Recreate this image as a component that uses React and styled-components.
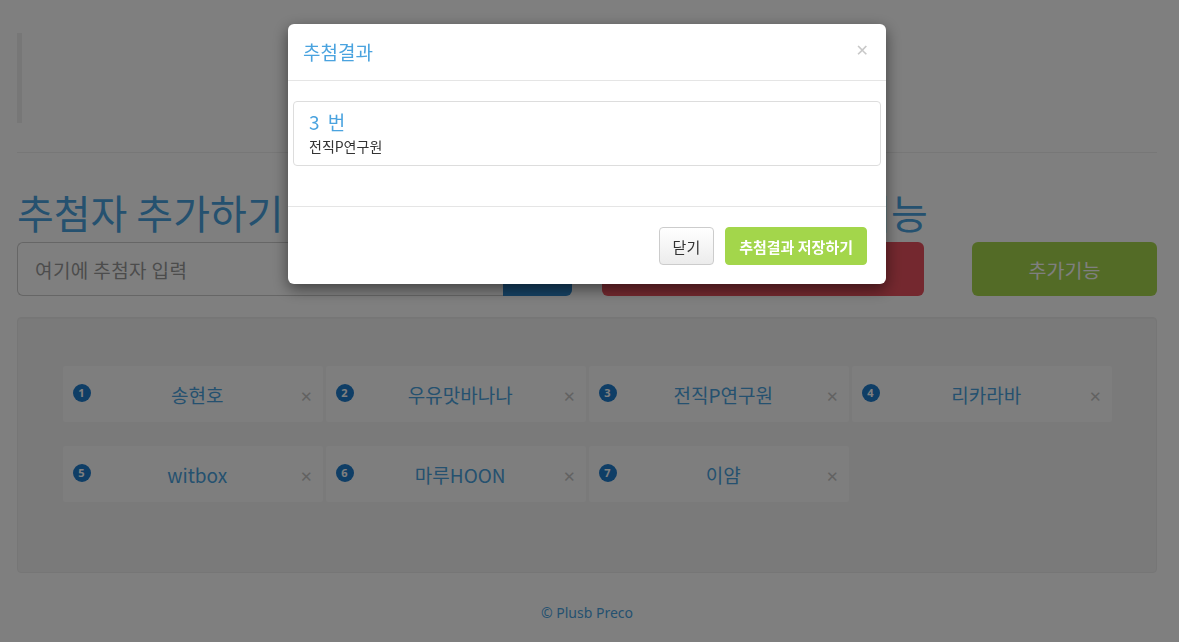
import styled, { createGlobalStyle } from 'styled-components'

const GlobalStyle = createGlobalStyle`
  html, body {
    margin: 0;
    padding: 0;
    background: #fff;
    font-family: "Noto Sans", "Noto Sans CJK KR", sans-serif;
    color: #333;
    font-size: 14px;
  }
  * { box-sizing: border-box; }
`

const Page = styled.div`
  padding: 33px 22px 0 17px;
  height: 642px;
  overflow: hidden;
`

const Quote = styled.blockquote`
  margin: 0;
  height: 90px;
  border-left: 5px solid #eee;
`

const Rule = styled.hr`
  margin: 29px 0 0;
  border: 0;
  border-top: 1px solid #eee;
`

const TopRow = styled.div`
  display: grid;
  grid-template-columns: 555px 555px;
  column-gap: 30px;
  margin-top: 39px;
`

const Heading = styled.h1`
  margin: 0 0 10px;
  font-family: "Noto Sans CJK KR", sans-serif;
  font-weight: 400;
  font-size: 40px;
  line-height: 40px;
  color: #4aa3df;
  white-space: nowrap;
`

const InputGroup = styled.div`
  display: flex;
  height: 54px;
`

const TextInput = styled.input`
  flex: 1;
  min-width: 0;
  border: 1px solid #ccc;
  border-right: 0;
  border-radius: 6px 0 0 6px;
  padding: 0 17px;
  font-family: "Noto Sans CJK KR", sans-serif;
  font-size: 19px;
  letter-spacing: 0.4px;
  color: #555;
  &::placeholder { color: #999; }
`

const AddButton = styled.button`
  width: 69px;
  border: 0;
  border-radius: 0 6px 6px 0;
  background: #2c84c8;
`

const ActionRow = styled.div`
  display: flex;
  justify-content: space-between;
  height: 54px;
`

const ActionButton = styled.button`
  width: ${p => p.$w}px;
  border: 0;
  border-radius: 6px;
  background: ${p => p.$bg};
  color: #fff;
  font-family: "Noto Sans CJK KR", sans-serif;
  font-size: 19.5px;
`

const Well = styled.div`
  margin-top: 21px;
  height: 256px;
  background: #f5f5f5;
  border: 1px solid #ececec;
  border-radius: 4px;
  box-shadow: inset 0 1px 1px rgba(0, 0, 0, 0.03);
  padding-top: 48px;
  display: grid;
  grid-template-columns: repeat(4, 260px);
  grid-auto-rows: 56px;
  column-gap: 3px;
  row-gap: 24px;
  justify-content: center;
  align-content: start;
`

const Card = styled.div`
  display: flex;
  align-items: center;
  padding: 0 10px;
  background: #fdfdfd;
  border-radius: 3px;
`

const Badge = styled.span`
  width: 18px;
  height: 18px;
  border-radius: 50%;
  background: #1f7ccc;
  color: #fff;
  font-family: "Noto Sans", sans-serif;
  font-weight: 700;
  font-size: 11px;
  line-height: 18px;
  text-align: center;
  margin-top: -2px;
`

const Name = styled.span`
  flex: 1;
  text-align: center;
  font-family: "Noto Sans CJK KR", sans-serif;
  font-size: 19px;
  color: #4aa3df;
  padding-left: 4px;
`

const Remove = styled.span`
  font-family: "DejaVu Sans", sans-serif;
  font-size: 15px;
  color: #c4c4c4;
  margin-top: 6px;
`

const Footer = styled.footer`
  text-align: center;
  margin-top: 30px;
  font-family: "Noto Sans", "Noto Sans CJK KR", sans-serif;
  font-size: 14px;
  color: #4aa3df;
`

const Backdrop = styled.div`
  position: fixed;
  inset: 0;
  background: rgba(0, 0, 0, 0.5);
`

const Dialog = styled.div`
  position: fixed;
  top: 24px;
  left: 288px;
  width: 598px;
  background: #fff;
  border-radius: 6px;
  box-shadow: 0 5px 15px rgba(0, 0, 0, 0.5);
  overflow: hidden;
`

const DialogHeader = styled.div`
  display: flex;
  align-items: center;
  justify-content: space-between;
  height: 57px;
  padding: 0 17px 2px 15px;
  border-bottom: 1px solid #e5e5e5;
`

const DialogTitle = styled.h4`
  margin: 0;
  font-family: "Noto Sans CJK KR", sans-serif;
  font-weight: 400;
  font-size: 19px;
  color: #4aa3df;
`

const Close = styled.span`
  font-family: "DejaVu Sans", sans-serif;
  font-size: 16px;
  color: #c8c8c8;
  margin-top: -2px;
`

const DialogBody = styled.div`
  padding: 20px 5px;
  height: 126px;
  border-bottom: 1px solid #e5e5e5;
`

const ResultBox = styled.div`
  height: 65px;
  border: 1px solid #ddd;
  border-radius: 4px;
  padding: 6px 15px 0;
`

const ResultNumber = styled.div`
  font-family: "Noto Sans CJK KR", sans-serif;
  font-size: 19px;
  line-height: 28px;
  word-spacing: 4px;
  color: #4aa3df;
`

const ResultName = styled.div`
  font-family: "Noto Sans CJK KR", sans-serif;
  font-size: 14px;
  line-height: 20px;
  color: #333;
`

const DialogFooter = styled.div`
  display: flex;
  justify-content: flex-end;
  gap: 11px;
  padding: 20px 19px 19px;
`

const FooterButton = styled.button`
  height: 38px;
  padding: 0 13px;
  border-radius: 4px;
  font-family: "Noto Sans CJK KR", sans-serif;
  font-size: 15px;
  font-weight: ${p => (p.$primary ? 700 : 400)};
  color: ${p => (p.$primary ? '#fff' : '#333')};
  border: 1px solid ${p => (p.$primary ? '#a3d64b' : '#ccc')};
  background: ${p => (p.$primary ? '#a3d64b' : 'linear-gradient(#fff, #ececec)')};
`

const entries = ['송현호', '우유맛바나나', '전직P연구원', '리카라바', 'witbox', '마루HOON', '이얌']

export default function App() {
  return (
    <>
      <GlobalStyle />
      <Page>
        <Quote />
        <Rule />
        <TopRow>
          <div>
            <Heading>추첨자 추가하기</Heading>
            <InputGroup>
              <TextInput placeholder="여기에 추첨자 입력" />
              <AddButton />
            </InputGroup>
          </div>
          <div>
            <Heading>추첨하기 ·추가기능</Heading>
            <ActionRow>
              <ActionButton $w={322} $bg="#e8515e">추첨하기</ActionButton>
              <ActionButton $w={185} $bg="#a6d64c">추가기능</ActionButton>
            </ActionRow>
          </div>
        </TopRow>
        <Well>
          {entries.map((name, i) => (
            <Card key={name}>
              <Badge>{i + 1}</Badge>
              <Name>{name}</Name>
              <Remove>✕</Remove>
            </Card>
          ))}
        </Well>
        <Footer>© Plusb Preco</Footer>
      </Page>
      <Backdrop />
      <Dialog>
        <DialogHeader>
          <DialogTitle>추첨결과</DialogTitle>
          <Close>✕</Close>
        </DialogHeader>
        <DialogBody>
          <ResultBox>
            <ResultNumber>3 번</ResultNumber>
            <ResultName>전직P연구원</ResultName>
          </ResultBox>
        </DialogBody>
        <DialogFooter>
          <FooterButton>닫기</FooterButton>
          <FooterButton $primary>추첨결과 저장하기</FooterButton>
        </DialogFooter>
      </Dialog>
    </>
  )
}
